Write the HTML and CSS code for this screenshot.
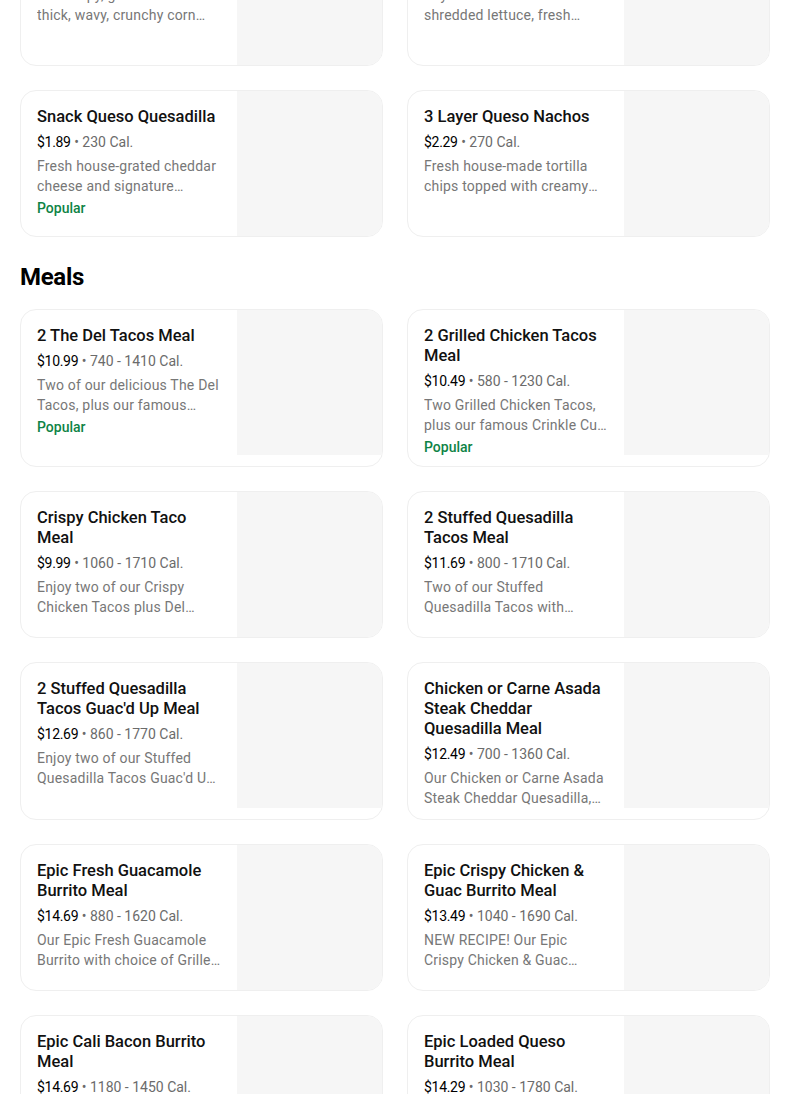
FILE: index.html
```html
<!DOCTYPE html>
<html lang="en">
<head>
<meta charset="utf-8">
<title>Menu</title>
<link rel="stylesheet" href="styles.css">
</head>
<body>
<main class="page">
  <section class="grid grid-top">
    <div class="card">
      <div class="info">
        <h3 class="title">Chili Cheese Fries</h3>
        <div class="meta"><span class="price">$3.19</span> • 620 Cal.</div>
        <p class="desc">Our crispy, golden fries with<br>thick, wavy, crunchy corn<br>tortilla strips and queso</p>
      </div>
      <div class="thumb"></div>
    </div>
    <div class="card">
      <div class="info">
        <h3 class="title">Beyond Avocado Taco</h3>
        <div class="meta"><span class="price">$3.49</span> • 290 Cal.</div>
        <p class="desc">Beyond Meat® with avocado<br>shredded lettuce, fresh<br>diced tomatoes and cheese</p>
      </div>
      <div class="thumb"></div>
    </div>
    <div class="card">
      <div class="info">
        <h3 class="title">Snack Queso Quesadilla</h3>
        <div class="meta"><span class="price">$1.89</span> • 230 Cal.</div>
        <p class="desc">Fresh house-grated cheddar cheese and signature…</p>
        <div class="popular">Popular</div>
      </div>
      <div class="thumb"></div>
    </div>
    <div class="card">
      <div class="info">
        <h3 class="title">3 Layer Queso Nachos</h3>
        <div class="meta"><span class="price">$2.29</span> • 270 Cal.</div>
        <p class="desc">Fresh house-made tortilla chips topped with creamy<br>queso blanco, beans and cheese.</p>
      </div>
      <div class="thumb"></div>
    </div>
  </section>

  <h2 class="section-title">Meals</h2>

  <section class="grid">
    <div class="card">
      <div class="info">
        <h3 class="title">2 The Del Tacos Meal</h3>
        <div class="meta"><span class="price">$10.99</span> • 740 - 1410 Cal.</div>
        <p class="desc">Two of our delicious The Del Tacos, plus our famous…</p>
        <div class="popular">Popular</div>
      </div>
      <div class="thumb"></div>
    </div>
    <div class="card">
      <div class="info">
        <h3 class="title">2 Grilled Chicken Tacos Meal</h3>
        <div class="meta"><span class="price">$10.49</span> • 580 - 1230 Cal.</div>
        <p class="desc">Two Grilled Chicken Tacos, plus our famous Crinkle Cu…</p>
        <div class="popular">Popular</div>
      </div>
      <div class="thumb"></div>
    </div>
    <div class="card">
      <div class="info">
        <h3 class="title">Crispy Chicken Taco Meal</h3>
        <div class="meta"><span class="price">$9.99</span> • 1060 - 1710 Cal.</div>
        <p class="desc">Enjoy two of our Crispy Chicken Tacos plus Del<br>Taco's famous Crinkle Cut Fries and a drink.</p>
      </div>
      <div class="thumb"></div>
    </div>
    <div class="card">
      <div class="info">
        <h3 class="title">2 Stuffed Quesadilla Tacos Meal</h3>
        <div class="meta"><span class="price">$11.69</span> • 800 - 1710 Cal.</div>
        <p class="desc">Two of our Stuffed Quesadilla Tacos with<br>Crinkle Cut Fries and a drink.</p>
      </div>
      <div class="thumb"></div>
    </div>
    <div class="card">
      <div class="info">
        <h3 class="title">2 Stuffed Quesadilla Tacos Guac'd Up Meal</h3>
        <div class="meta"><span class="price">$12.69</span> • 860 - 1770 Cal.</div>
        <p class="desc">Enjoy two of our Stuffed Quesadilla Tacos Guac'd Up with Crinkle Cut Fries and a drink.</p>
      </div>
      <div class="thumb"></div>
    </div>
    <div class="card">
      <div class="info">
        <h3 class="title">Chicken or Carne Asada Steak Cheddar Quesadilla Meal</h3>
        <div class="meta"><span class="price">$12.49</span> • 700 - 1360 Cal.</div>
        <p class="desc">Our Chicken or Carne Asada Steak Cheddar Quesadilla,<br>with Crinkle Cut Fries and a drink.</p>
      </div>
      <div class="thumb"></div>
    </div>
    <div class="card">
      <div class="info">
        <h3 class="title">Epic Fresh Guacamole Burrito Meal</h3>
        <div class="meta"><span class="price">$14.69</span> • 880 - 1620 Cal.</div>
        <p class="desc">Our Epic Fresh Guacamole Burrito with choice of Grilled Chicken or Carne Asada Steak.</p>
      </div>
      <div class="thumb"></div>
    </div>
    <div class="card">
      <div class="info">
        <h3 class="title">Epic Crispy Chicken &amp; Guac Burrito Meal</h3>
        <div class="meta"><span class="price">$13.49</span> • 1040 - 1690 Cal.</div>
        <p class="desc">NEW RECIPE! Our Epic<br>Crispy Chicken &amp; Guac<br>Burrito with Crinkle Cut Fries and a drink.</p>
      </div>
      <div class="thumb"></div>
    </div>
    <div class="card">
      <div class="info">
        <h3 class="title">Epic Cali Bacon Burrito Meal</h3>
        <div class="meta"><span class="price">$14.69</span> • 1180 - 1450 Cal.</div>
        <p class="desc">Our Epic Cali Bacon Burrito with Crinkle Cut Fries and a drink.</p>
      </div>
      <div class="thumb"></div>
    </div>
    <div class="card">
      <div class="info">
        <h3 class="title">Epic Loaded Queso Burrito Meal</h3>
        <div class="meta"><span class="price">$14.29</span> • 1030 - 1780 Cal.</div>
        <p class="desc">Our Epic Loaded Queso Burrito with Crinkle Cut Fries and a drink.</p>
      </div>
      <div class="thumb"></div>
    </div>
  </section>
</main>
</body>
</html>
```

FILE: styles.css
```css
* { box-sizing: border-box; }
html, body { margin: 0; padding: 0; background: #fff; }
body {
  font-family: Roboto, "Liberation Sans", sans-serif;
  color: #000;
  overflow: hidden;
  height: 1094px;
}
.page {
  width: 750px;
  margin: -81px 0 0 20px;
}
.grid {
  display: grid;
  grid-template-columns: 363px 363px;
  column-gap: 24px;
  row-gap: 24px;
}
.card {
  display: flex;
  border: 1px solid #efefef;
  border-radius: 16px;
  overflow: hidden;
  min-height: 147px;
  background: #fff;
}
.info {
  flex: 1;
  min-width: 0;
  padding: 16px 16px 11px 16px;
}
.thumb {
  width: 145px;
  height: 145px;
  flex: none;
  background: #f6f6f6;
}
.title {
  margin: 0;
  font-size: 16.5px;
  font-weight: 500;
  line-height: 20px;
  color: #111;
}
.meta {
  margin-top: 5px;
  font-size: 14px;
  line-height: 20px;
  color: #6b6b6b;
}
.price { color: #000; letter-spacing: -0.3px; }
.desc {
  margin: 4px 0 0;
  font-size: 14px;
  line-height: 20px;
  letter-spacing: 0.2px;
  color: #777;
  display: -webkit-box;
  -webkit-line-clamp: 2;
  -webkit-box-orient: vertical;
  overflow: hidden;
}
.popular {
  margin-top: 4px;
  font-size: 14px;
  line-height: 16px;
  font-weight: 500;
  color: #0e8345;
}
.section-title {
  margin: 24px 0 16px;
  font-size: 24px;
  line-height: 32px;
  font-weight: 700;
  letter-spacing: -0.3px;
}
```
